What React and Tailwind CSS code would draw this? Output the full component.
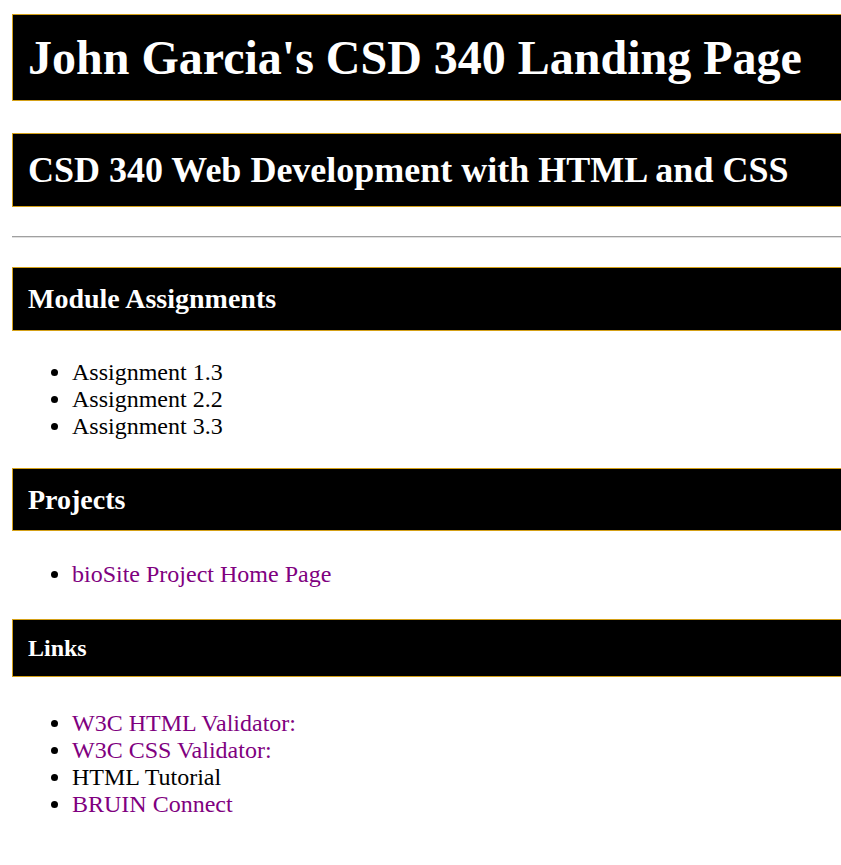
import React from "react";

const box = "bg-black text-white font-bold border border-[#D4A017] pl-[15px] whitespace-nowrap";

export default function App() {
  return (
    <div className="w-full overflow-hidden bg-white text-black" style={{ fontFamily: '"Liberation Serif", "Times New Roman", serif' }}>
      <div className="pl-[12px] pb-[40px]">
        <h1 className={`${box} w-[900px] mt-[14px] py-[15px] text-[48px] leading-[55px]`}>
          John Garcia's CSD 340 Landing Page
        </h1>
        <h2 className={`${box} w-[900px] mt-[32px] py-[15px] text-[36px] leading-[42px]`}>
          CSD 340 Web Development with HTML and CSS
        </h2>
        <hr className="w-[900px] mt-[29px] border-0 border-t border-t-[#a0a0a0] border-b border-b-[#e0e0e0] h-[2px]" />
        <h3 className={`${box} w-[900px] mt-[29px] py-[15px] text-[28px] leading-[32px]`}>
          Module Assignments
        </h3>
        <ul className="list-disc pl-[60px] mt-[28px] text-[24px] leading-[27px]">
          <li>Assignment 1.3</li>
          <li>Assignment 2.2</li>
          <li>Assignment 3.3</li>
        </ul>
        <h3 className={`${box} w-[900px] mt-[28px] py-[15px] text-[28px] leading-[31px]`}>
          Projects
        </h3>
        <ul className="list-disc pl-[60px] mt-[30px] text-[24px] leading-[27px]">
          <li><a className="text-[#800080]">bioSite Project Home Page</a></li>
        </ul>
        <h4 className={`${box} w-[900px] mt-[31px] py-[14px] text-[24px] leading-[28px]`}>
          Links
        </h4>
        <ul className="list-disc pl-[60px] mt-[33px] text-[24px] leading-[27px]">
          <li><a className="text-[#800080]">W3C HTML Validator:</a></li>
          <li><a className="text-[#800080]">W3C CSS Validator:</a></li>
          <li>HTML Tutorial</li>
          <li><a className="text-[#800080]">BRUIN Connect</a></li>
        </ul>
      </div>
    </div>
  );
}
